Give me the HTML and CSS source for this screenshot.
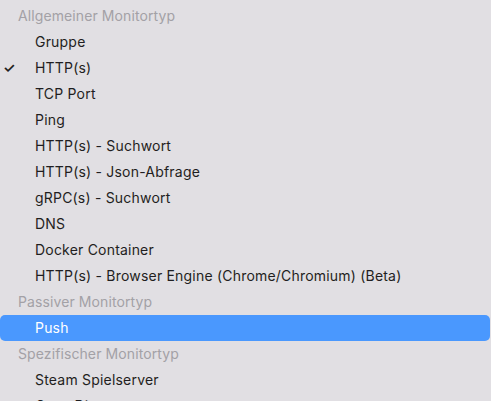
FILE: index.html
```html
<!DOCTYPE html>
<html lang="de">
<head>
<meta charset="utf-8">
<link rel="stylesheet" href="styles.css">
</head>
<body>
<div class="menu">
  <div class="row header">Allgemeiner Monitortyp</div>
  <div class="row item">Gruppe</div>
  <div class="row item checked"><span class="check">✓</span>HTTP(s)</div>
  <div class="row item">TCP Port</div>
  <div class="row item">Ping</div>
  <div class="row item">HTTP(s) - Suchwort</div>
  <div class="row item">HTTP(s) - Json-Abfrage</div>
  <div class="row item">gRPC(s) - Suchwort</div>
  <div class="row item">DNS</div>
  <div class="row item">Docker Container</div>
  <div class="row item">HTTP(s) - Browser Engine (Chrome/Chromium) (Beta)</div>
  <div class="row header">Passiver Monitortyp</div>
  <div class="row item selected">Push</div>
  <div class="row header">Spezifischer Monitortyp</div>
  <div class="row item">Steam Spielserver</div>
  <div class="row item">GameDig</div>
</div>
</body>
</html>
```
FILE: styles.css
```css
html, body {
  margin: 0;
  padding: 0;
  background: #e1dfe3;
  overflow: hidden;
}
.menu {
  padding-top: 3px;
  width: 490px;
  font-family: Inter, "Noto Sans", sans-serif;
  font-size: 14px;
  letter-spacing: 0.2px;
}
.row {
  height: 26px;
  line-height: 26px;
  position: relative;
  white-space: nowrap;
}
.header {
  padding-left: 18px;
  color: #a3a1a6;
  letter-spacing: 0.1px;
}
.item {
  padding-left: 35px;
  color: #1f1e21;
}
.selected {
  background: #4a98fe;
  color: #ffffff;
  border-radius: 5px;
}
.check {
  position: absolute;
  left: 3px;
  top: 0;
  font-size: 14px;
  font-weight: 600;
}
```
